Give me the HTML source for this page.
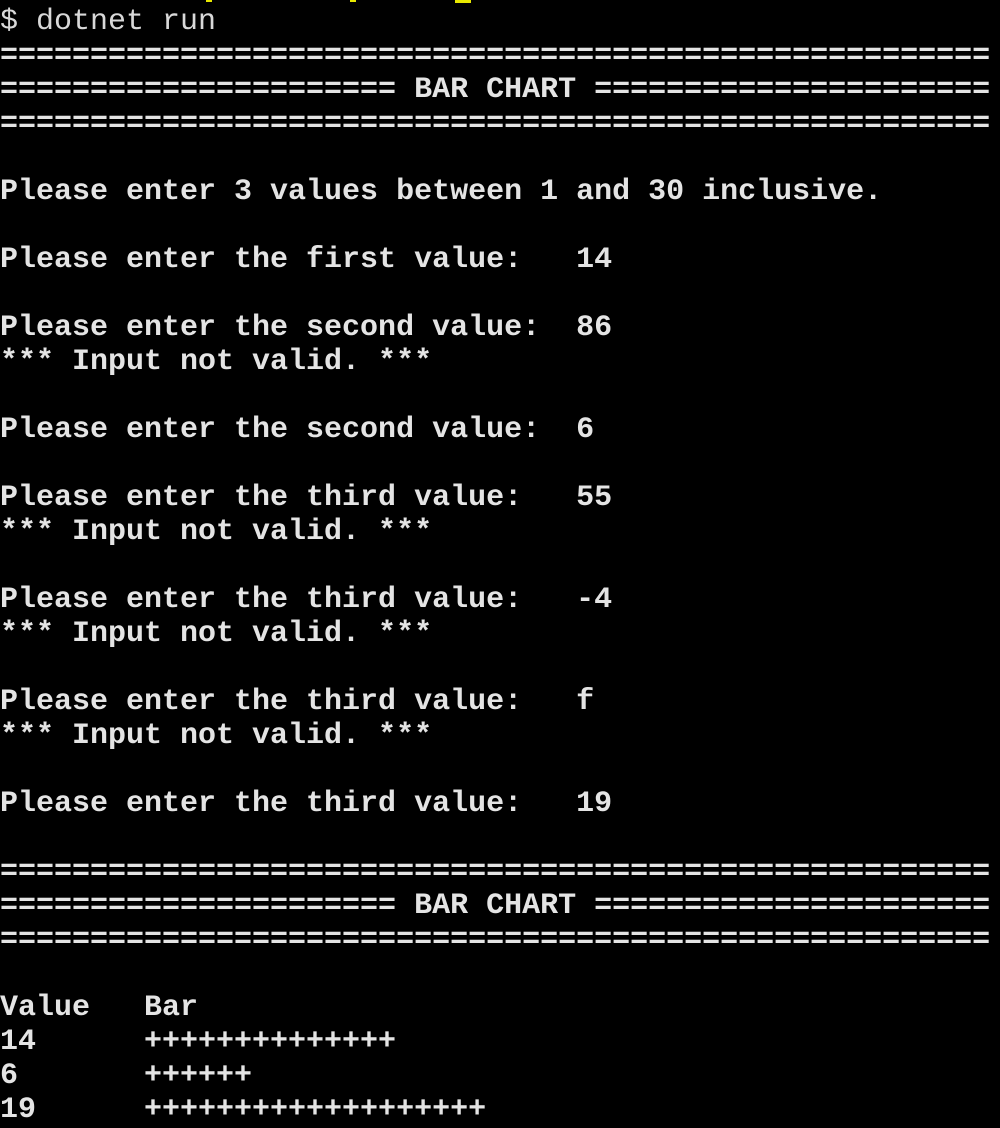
<!DOCTYPE html>
<html><head><meta charset="utf-8"><style>
html,body{margin:0;padding:0;background:#000;width:1000px;height:1128px;overflow:hidden;}
pre{margin:0;padding:5px 0 0 0;font-family:"Liberation Mono",monospace;font-size:30px;line-height:34px;color:#e4e4e4;font-weight:bold;white-space:pre;}
.n{font-weight:normal;color:#d8d8d8}
.y{position:absolute;background:#e8e800;}
</style></head><body>
<div class="y" style="left:206px;top:0;width:6px;height:2px"></div>
<div class="y" style="left:350px;top:0;width:6px;height:2px"></div>
<div class="y" style="left:455px;top:0;width:16px;height:3px"></div>
<pre><span class="n">$ dotnet run</span>
=======================================================
====================== BAR CHART ======================
=======================================================

Please enter 3 values between 1 and 30 inclusive.

Please enter the first value:   14

Please enter the second value:  86
*** Input not valid. ***

Please enter the second value:  6

Please enter the third value:   55
*** Input not valid. ***

Please enter the third value:   -4
*** Input not valid. ***

Please enter the third value:   f
*** Input not valid. ***

Please enter the third value:   19

=======================================================
====================== BAR CHART ======================
=======================================================

Value   Bar
14      ++++++++++++++
6       ++++++
19      +++++++++++++++++++
</pre>
</body></html>
